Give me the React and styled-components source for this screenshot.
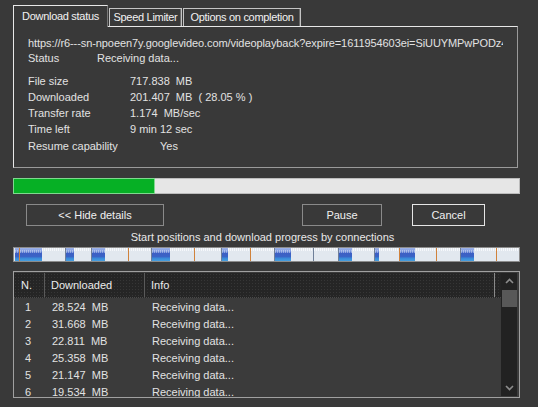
import React from 'react';
import styled, { createGlobalStyle } from 'styled-components';

const GlobalStyle = createGlobalStyle`
  html, body {
    margin: 0;
    padding: 0;
    background: #393939;
  }
`;

const Page = styled.div`
  width: 538px;
  height: 407px;
  box-sizing: border-box;
  padding: 5px 18px 0 13px;
  background: #393939;
  font-family: "Liberation Sans", Arial, sans-serif;
  font-size: 11px;
  color: #e2e2e2;
  overflow: hidden;
`;

// - tabs
const TabStrip = styled.div`
  display: flex;
  align-items: flex-end;
  height: 21px;
`;

const Tab = styled.div`
  box-sizing: border-box;
  width: ${p => p.w}px;
  display: flex;
  align-items: center;
  justify-content: center;
  position: relative;
  z-index: 1;
  white-space: nowrap;
  letter-spacing: -0.3px;
  color: #f2f2f2;
  background: #393939;
  ${p => p.active ? `
    height: 22px;
    margin-bottom: -1px;
    padding-bottom: 2px;
    border-top: 1px solid #e8e8e8;
    border-left: 1px solid #e8e8e8;
    border-right: 1px solid #7a7a7a;
  ` : `
    height: 18px;
    margin-left: 1px;
    padding-bottom: 1px;
    border: 1px solid #c4c4c4;
    border-bottom: none;
    box-shadow: inset -1px 0 0 #6a6a6a;
  `}
`;

const Panel = styled.div`
  box-sizing: border-box;
  height: 142px;
  margin-right: 2px;
  padding: 9px 14px 0 14px;
  border-top: 1px solid #e8e8e8;
  border-left: 1px solid #e8e8e8;
  border-right: 1px solid #9a9a9a;
  border-bottom: 1px solid #9a9a9a;
`;

const UrlLine = styled.div`
  line-height: 14px;
  white-space: nowrap;
  overflow: hidden;
  letter-spacing: -0.08px;
`;

const InfoGroup = styled.div`
  margin-top: ${p => p.gap || 0}px;
`;

const InfoRow = styled.div`
  display: flex;
  line-height: ${p => p.lh || 16}px;
  margin-top: ${p => p.mt || 0}px;
  white-space: pre;
`;

const Label = styled.span`
  width: ${p => p.w}px;
  flex-shrink: 0;
`;

// - progress
const ProgressBar = styled.div`
  box-sizing: border-box;
  height: 16px;
  margin-top: 10px;
  background: #e6e6e6;
  border: 1px solid #bcbcbc;
`;

const ProgressFill = styled.div`
  height: 100%;
  background: #06b025;
  box-shadow: 0 0 0 1px #7fd88f;
`;

const ButtonRow = styled.div`
  display: flex;
  margin-top: 10px;
  margin-right: 35px;
  padding-left: 13px;
`;

const Button = styled.button`
  box-sizing: border-box;
  width: ${p => p.w}px;
  height: 22px;
  margin-left: ${p => p.ml || 0};
  padding: 0;
  background: #393939;
  color: #f0f0f0;
  font-family: inherit;
  font-size: 11px;
  border: 1px solid ${p => p.primary ? '#e6e6e6' : '#8a8a8a'};
  border-radius: 0;
`;

const Caption = styled.div`
  margin-top: 4px;
  padding-right: 8px;
  line-height: 14px;
  text-align: center;
  color: #e8e8e8;
`;

// - connection map
const ConnBar = styled.div`
  box-sizing: border-box;
  display: flex;
  height: 15px;
  margin-top: 3px;
  border: 1px solid #8c8c8c;
  background: #e4eaf1;
`;

const Segment = styled.div`
  box-sizing: border-box;
  height: 100%;
  flex-shrink: 0;
  border-left: 1px solid ${p => p.mark === 'o' ? '#d0823c' : p.mark === 'g' ? '#6f7f98' : 'transparent'};
  background:
    repeating-linear-gradient(90deg, #f6f8fb 0 1px, transparent 1px 2px) top / 100% 3px no-repeat,
    #e2e8ef;
  &:last-child { flex: 1; }
`;

const SegFill = styled.div`
  height: 100%;
  background:
    repeating-linear-gradient(90deg, rgba(255,255,255,0.35) 0 1px, transparent 1px 2px) 0 2px / 100% 3px no-repeat,
    linear-gradient(180deg, #9fb4ea 0%, #7f9be0 25%, #3d5fc4 40%, #3a63c6 65%, #3a8ad8 80%, #46a0e0 100%);
`;

// - connection list
const ListBox = styled.div`
  box-sizing: border-box;
  display: flex;
  height: 127px;
  margin-top: 9px;
  padding: 1px 2px 0 0;
  border: 1px solid #a0a0a0;
  background: #3b3b3b;
  overflow: hidden;
`;

const TableArea = styled.div`
  flex: 1;
  overflow: hidden;
`;

const HeaderRow = styled.div`
  display: flex;
  height: 24px;
  align-items: center;
  background-color: #252525;
  background-image: radial-gradient(#363636 0.6px, transparent 0.8px);
  background-size: 3px 3px;
  border-bottom: 1px dotted #4a4a4a;
  color: #ececec;
`;

const HeadCell = styled.div`
  box-sizing: border-box;
  width: ${p => p.w}px;
  height: 100%;
  display: flex;
  align-items: center;
  padding-left: ${p => p.pl}px;
  border-left: ${p => p.divider ? '1px solid #5a5a5a' : 'none'};
  border-right: ${p => p.end ? '1px solid #8a8a8a' : 'none'};
`;

const Body = styled.div`
  padding-top: 0;
`;

const Row = styled.div`
  display: flex;
  height: 17px;
  align-items: center;
  color: #e2e2e2;
`;

const Cell = styled.div`
  box-sizing: border-box;
  width: ${p => p.w}px;
  padding-left: ${p => p.pl}px;
  white-space: pre;
`;

const ScrollTrack = styled.div`
  display: flex;
  flex-direction: column;
  width: 16px;
  margin-bottom: 1px;
  background: #222222;
`;

const ScrollArrow = styled.div`
  height: 16px;
  display: flex;
  align-items: center;
  justify-content: center;
`;

const ScrollThumb = styled.div`
  height: 17px;
  margin: 1px 0 0 1px;
  background: #585858;
`;

const ScrollSpace = styled.div`
  flex: 1;
`;

const Chevron = ({ up }) => (
  <svg width="9" height="6" viewBox="0 0 9 6">
    <path
      d={up ? 'M1 5 L4.5 1.5 L8 5' : 'M1 1 L4.5 4.5 L8 1'}
      fill="none"
      stroke="#8c8c8c"
      strokeWidth="1.6"
    />
  </svg>
);

// start marks and filled widths of each connection piece, in px
const segments = [
  { w: 5, fill: 5, mark: null },
  { w: 46, fill: 22, mark: 'o' },
  { w: 26, fill: 8, mark: 'g' },
  { w: 37, fill: 13, mark: 'g' },
  { w: 23, fill: 0, mark: 'o' },
  { w: 43, fill: 18, mark: 'g' },
  { w: 27, fill: 0, mark: 'o' },
  { w: 29, fill: 6, mark: 'g' },
  { w: 24, fill: 0, mark: 'o' },
  { w: 39, fill: 16, mark: 'g' },
  { w: 25, fill: 0, mark: 'g' },
  { w: 36, fill: 13, mark: 'g' },
  { w: 25, fill: 4, mark: 'g' },
  { w: 37, fill: 15, mark: 'o' },
  { w: 24, fill: 0, mark: 'o' },
  { w: 36, fill: 13, mark: 'g' },
  { w: 24, fill: 0, mark: 'o' },
];

const connections = [
  { n: 1, size: '28.524  MB' },
  { n: 2, size: '31.668  MB' },
  { n: 3, size: '22.811  MB' },
  { n: 4, size: '25.358  MB' },
  { n: 5, size: '21.147  MB' },
  { n: 6, size: '19.534  MB' },
];

export default function App() {
  return (
    <Page>
      <GlobalStyle />
      <TabStrip>
        <Tab active w={95}>Download status</Tab>
        <Tab w={73}>Speed Limiter</Tab>
        <Tab w={118}>Options on completion</Tab>
      </TabStrip>
      <Panel>
        <UrlLine>https://r6---sn-npoeen7y.googlevideo.com/videoplayback?expire=1611954603ei=SiUUYMPwPODz4lVl8</UrlLine>
        <InfoRow lh={17}><Label w={69}>Status</Label>Receiving data...</InfoRow>
        <InfoGroup gap={6}>
          <InfoRow><Label w={102}>File size</Label>717.838  MB</InfoRow>
          <InfoRow><Label w={102}>Downloaded</Label>201.407  MB  ( 28.05 % )</InfoRow>
          <InfoRow><Label w={102}>Transfer rate</Label>1.174  MB/sec</InfoRow>
          <InfoRow><Label w={102}>Time left</Label>9 min 12 sec</InfoRow>
          <InfoRow mt={1}><Label w={132}>Resume capability</Label>Yes</InfoRow>
        </InfoGroup>
      </Panel>

      <ProgressBar>
        <ProgressFill style={{ width: '27.8%' }} />
      </ProgressBar>

      <ButtonRow>
        <Button w={138}>&lt;&lt; Hide details</Button>
        <Button w={80} ml="auto">Pause</Button>
        <Button w={73} ml="30px" primary>Cancel</Button>
      </ButtonRow>

      <Caption>Start positions and download progress by connections</Caption>
      <ConnBar>
        {segments.map((s, i) => (
          <Segment key={i} mark={s.mark} style={{ width: s.w }}>
            {s.fill > 0 && <SegFill style={{ width: s.fill }} />}
          </Segment>
        ))}
      </ConnBar>

      <ListBox>
        <TableArea>
          <HeaderRow>
            <HeadCell w={30} pl={7}>N.</HeadCell>
            <HeadCell w={100} pl={6} divider>Downloaded</HeadCell>
            <HeadCell w={351} pl={6} divider end>Info</HeadCell>
          </HeaderRow>
          <Body>
            {connections.map(c => (
              <Row key={c.n}>
                <Cell w={31} pl={11}>{c.n}</Cell>
                <Cell w={100} pl={7}>{c.size}</Cell>
                <Cell w={300} pl={7}>Receiving data...</Cell>
              </Row>
            ))}
          </Body>
        </TableArea>
        <ScrollTrack>
          <ScrollArrow><Chevron up /></ScrollArrow>
          <ScrollThumb />
          <ScrollSpace />
          <ScrollArrow><Chevron /></ScrollArrow>
        </ScrollTrack>
      </ListBox>
    </Page>
  );
}
